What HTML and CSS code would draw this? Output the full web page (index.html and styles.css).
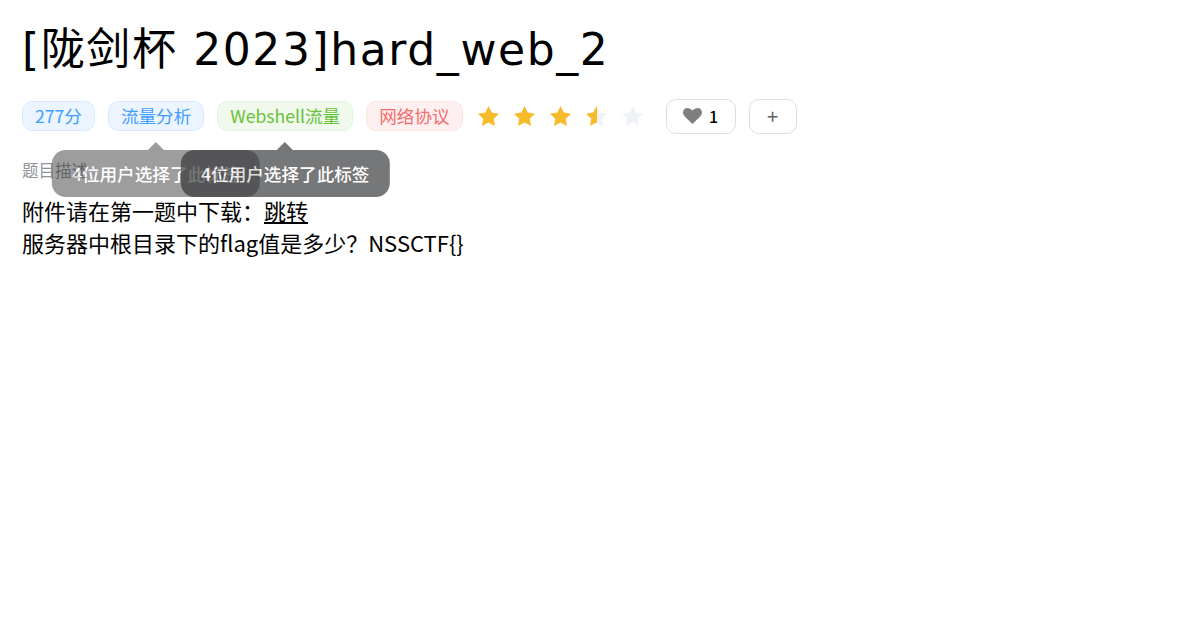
FILE: index.html
```html
<!DOCTYPE html>
<html lang="zh-CN">
<head>
<meta charset="utf-8">
<title>hard_web_2</title>
<link rel="stylesheet" href="styles.css">
</head>
<body>
<div class="page">
  <h1 class="title">[陇剑杯 2023]hard_web_2</h1>
  <div class="meta">
    <span class="tag tag-blue">277分</span>
    <span class="tag-wrap">
      <span class="tag tag-blue">流量分析</span>
      <span class="tip tip-a">4位用户选择了此标签</span>
    </span>
    <span class="tag-wrap">
      <span class="tag tag-green">Webshell流量</span>
      <span class="tip tip-b">4位用户选择了此标签</span>
    </span>
    <span class="tag tag-red">网络协议</span>
    <div class="rate">
      <svg class="star on" viewBox="2 2 20 19"><polygon points="12,2 15.09,8.26 22,9.27 17,14.14 18.18,21.02 12,17.77 5.82,21.02 7,14.14 2,9.27 8.91,8.26"/></svg>
      <svg class="star on" viewBox="2 2 20 19"><polygon points="12,2 15.09,8.26 22,9.27 17,14.14 18.18,21.02 12,17.77 5.82,21.02 7,14.14 2,9.27 8.91,8.26"/></svg>
      <svg class="star on" viewBox="2 2 20 19"><polygon points="12,2 15.09,8.26 22,9.27 17,14.14 18.18,21.02 12,17.77 5.82,21.02 7,14.14 2,9.27 8.91,8.26"/></svg>
      <svg class="star half" viewBox="2 2 20 19"><defs><linearGradient id="hg" x1="0" x2="1" y1="0" y2="0"><stop offset="0.5" stop-color="#f7ba2a"/><stop offset="0.5" stop-color="#eff2f7"/></linearGradient></defs><polygon fill="url(#hg)" points="12,2 15.09,8.26 22,9.27 17,14.14 18.18,21.02 12,17.77 5.82,21.02 7,14.14 2,9.27 8.91,8.26"/></svg>
      <svg class="star off" viewBox="2 2 20 19"><polygon points="12,2 15.09,8.26 22,9.27 17,14.14 18.18,21.02 12,17.77 5.82,21.02 7,14.14 2,9.27 8.91,8.26"/></svg>
    </div>
    <button class="btn btn-like">
      <svg class="heart" viewBox="0 0 24 20"><path d="M12 20 L10.3 18.4 C4.2 12.9 0 9.2 0 5.6 C0 2.5 2.4 0 5.5 0 C7.3 0 9.1 0.9 12 3.2 C14.9 0.9 16.7 0 18.5 0 C21.6 0 24 2.5 24 5.6 C24 9.2 19.8 12.9 13.7 18.4 Z"/></svg>
      <span class="count">1</span>
    </button>
    <button class="btn btn-add">+</button>
  </div>
  <div class="desc-label">题目描述</div>
  <div class="desc">
    <p>附件请在第一题中下载：<a href="#" class="link">跳转</a></p>
    <p>服务器中根目录下的flag值是多少？NSSCTF{}</p>
  </div>
</div>
</body>
</html>
```

FILE: styles.css
```css
html, body {
  margin: 0;
  padding: 0;
  background: #ffffff;
}

body {
  font-family: "Noto Sans CJK SC", "Noto Sans", sans-serif;
  color: #000;
}

.page {
  padding: 20px 22px 0 22px;
}

.title {
  margin: 0;
  font-family: "DejaVu Sans", "Noto Sans CJK SC", sans-serif;
  font-size: 44px;
  font-weight: 400;
  line-height: 60px;
  letter-spacing: 1.6px;
  color: #000;
}

.meta {
  display: flex;
  align-items: center;
  margin-top: 18px;
  height: 36px;
}

.tag-wrap {
  position: relative;
  display: inline-flex;
  margin-right: 13px;
}

.tag {
  display: inline-flex;
  align-items: center;
  box-sizing: border-box;
  height: 30px;
  padding: 0 12px;
  border: 1px solid;
  border-radius: 10px;
  font-size: 17.6px;
  line-height: 1;
  margin-right: 13px;
  white-space: nowrap;
}

.tag-wrap .tag {
  margin-right: 0;
}

.tag-blue {
  background: #ecf5ff;
  border-color: #d9ecff;
  color: #409eff;
}

.tag-green {
  background: #f0f9eb;
  border-color: #e1f3d8;
  color: #67c23a;
}

.tag-red {
  background: #fef0f0;
  border-color: #fde2e2;
  color: #f56c6c;
}

.tip {
  position: absolute;
  top: 49px;
  left: 50%;
  transform: translateX(-50%);
  z-index: 5;
  box-sizing: border-box;
  height: 47px;
  display: flex;
  align-items: center;
  padding: 0 20px;
  border-radius: 14px;
  background: #303133;
  color: #ffffff;
  font-size: 17.6px;
  font-weight: 500;
  white-space: nowrap;
}

.tip::before {
  content: "";
  position: absolute;
  top: -8px;
  left: 50%;
  margin-left: -8px;
  border-left: 8px solid transparent;
  border-right: 8px solid transparent;
  border-bottom: 8px solid #303133;
}

.tip-a {
  opacity: 0.47;
}

.tip-b {
  opacity: 0.66;
}

.rate {
  display: flex;
  align-items: center;
  gap: 15px;
  margin-left: 2px;
  margin-right: 23px;
}

.star {
  width: 21px;
  height: 20px;
  display: block;
}

.star.on {
  fill: #f7ba2a;
}

.star.off {
  fill: #eff2f7;
}

.btn {
  display: inline-flex;
  align-items: center;
  justify-content: center;
  box-sizing: border-box;
  height: 35px;
  border: 1px solid #dcdfe6;
  border-radius: 10px;
  background: #fff;
  font-family: "Noto Sans CJK SC", "Noto Sans", sans-serif;
  padding: 0;
  margin: 0;
}

.btn-like {
  width: 70px;
  gap: 7px;
  margin-right: 13px;
}

.heart {
  width: 19px;
  height: 16px;
  fill: #7f7f7f;
}

.count {
  font-size: 16px;
  font-weight: 500;
  color: #000;
  line-height: 1;
}

.btn-add {
  width: 48px;
  font-size: 20px;
  color: #606266;
  line-height: 1;
}

.desc-label {
  margin-top: 24px;
  font-size: 16.5px;
  color: #909399;
  line-height: 24px;
}

.desc {
  margin-top: 12px;
  font-size: 22px;
  line-height: 32px;
}

.desc p {
  margin: 0;
}

.link {
  color: #000;
  text-decoration: underline;
}
```
